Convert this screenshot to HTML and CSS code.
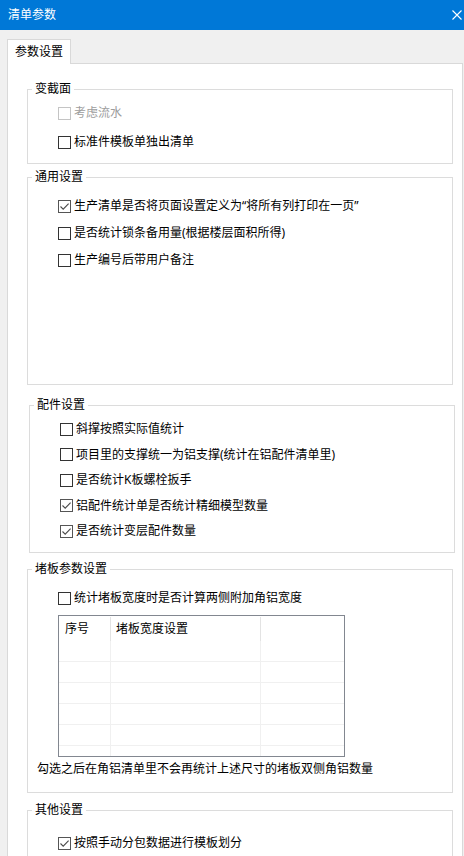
FILE: index.html
```html
<!DOCTYPE html>
<html lang="zh-CN">
<head>
<meta charset="utf-8">
<title>清单参数</title>
<link rel="stylesheet" href="styles.css">
</head>
<body>
<div class="window">
  <div class="titlebar">
    <span class="title">清单参数</span>
    <svg class="close" width="10" height="10" viewBox="0 0 10 10"><path d="M0.5 0.5 L9.5 9.5 M9.5 0.5 L0.5 9.5" stroke="#fff" stroke-width="1.1" fill="none"/></svg>
  </div>
  <div class="client">
    <div class="tabs"><div class="tab">参数设置</div></div>
    <div class="panel">
      <fieldset class="group g1">
        <legend>变截面</legend>
        <div class="rows">
          <div class="cb disabled"><span class="box"></span><span class="lbl">考虑流水</span></div>
          <div class="cb"><span class="box"></span><span class="lbl">标准件模板单独出清单</span></div>
        </div>
      </fieldset>
      <fieldset class="group g2">
        <legend>通用设置</legend>
        <div class="rows">
          <div class="cb checked"><span class="box"><svg width="11" height="11" viewBox="0 0 11 11"><path d="M1.5 5.5 L4.2 8.2 L9.6 2.6" stroke="#4a4a4a" stroke-width="1.1" fill="none"/></svg></span><span class="lbl">生产清单是否将页面设置定义为“将所有列打印在一页”</span></div>
          <div class="cb"><span class="box"></span><span class="lbl">是否统计锁条备用量(根据楼层面积所得)</span></div>
          <div class="cb"><span class="box"></span><span class="lbl">生产编号后带用户备注</span></div>
        </div>
      </fieldset>
      <fieldset class="group g3">
        <legend>配件设置</legend>
        <div class="rows">
          <div class="cb"><span class="box"></span><span class="lbl">斜撑按照实际值统计</span></div>
          <div class="cb"><span class="box"></span><span class="lbl">项目里的支撑统一为铝支撑(统计在铝配件清单里)</span></div>
          <div class="cb"><span class="box"></span><span class="lbl">是否统计K板螺栓扳手</span></div>
          <div class="cb checked"><span class="box"><svg width="11" height="11" viewBox="0 0 11 11"><path d="M1.5 5.5 L4.2 8.2 L9.6 2.6" stroke="#4a4a4a" stroke-width="1.1" fill="none"/></svg></span><span class="lbl">铝配件统计单是否统计精细模型数量</span></div>
          <div class="cb checked"><span class="box"><svg width="11" height="11" viewBox="0 0 11 11"><path d="M1.5 5.5 L4.2 8.2 L9.6 2.6" stroke="#4a4a4a" stroke-width="1.1" fill="none"/></svg></span><span class="lbl">是否统计变层配件数量</span></div>
        </div>
      </fieldset>
      <fieldset class="group g4">
        <legend>堵板参数设置</legend>
        <div class="rows">
          <div class="cb"><span class="box"></span><span class="lbl">统计堵板宽度时是否计算两侧附加角铝宽度</span></div>
          <div class="grid">
            <div class="ghead">
              <div class="gc c1">序号</div>
              <div class="gc c2">堵板宽度设置</div>
              <div class="gc c3"></div>
            </div>
            <div class="grow"><div class="gc c1"></div><div class="gc c2"></div><div class="gc c3"></div></div>
            <div class="grow"><div class="gc c1"></div><div class="gc c2"></div><div class="gc c3"></div></div>
            <div class="grow"><div class="gc c1"></div><div class="gc c2"></div><div class="gc c3"></div></div>
            <div class="grow"><div class="gc c1"></div><div class="gc c2"></div><div class="gc c3"></div></div>
            <div class="grow"><div class="gc c1"></div><div class="gc c2"></div><div class="gc c3"></div></div>
            <div class="grow"><div class="gc c1"></div><div class="gc c2"></div><div class="gc c3"></div></div>
          </div>
          <div class="note">勾选之后在角铝清单里不会再统计上述尺寸的堵板双侧角铝数量</div>
        </div>
      </fieldset>
      <fieldset class="group g5">
        <legend>其他设置</legend>
        <div class="rows">
          <div class="cb checked"><span class="box"><svg width="11" height="11" viewBox="0 0 11 11"><path d="M1.5 5.5 L4.2 8.2 L9.6 2.6" stroke="#4a4a4a" stroke-width="1.1" fill="none"/></svg></span><span class="lbl">按照手动分包数据进行模板划分</span></div>
        </div>
      </fieldset>
    </div>
  </div>
</div>
</body>
</html>
```

FILE: styles.css
```css
html, body {
  margin: 0;
  padding: 0;
}
body {
  width: 464px;
  height: 856px;
  overflow: hidden;
  background: #f0f0f0;
  font-family: "Noto Sans", "Noto Sans CJK SC", sans-serif;
  font-size: 12px;
  line-height: 16px;
  color: #000;
}
.window {
  width: 464px;
  height: 856px;
  display: flex;
  flex-direction: column;
}
.titlebar {
  height: 30px;
  flex: none;
  background: #0078d7;
  display: flex;
  align-items: center;
  justify-content: space-between;
  padding: 0 2px 0 8px;
  box-sizing: border-box;
}
.title {
  color: #fff;
  font-size: 12px;
}
.close {
  display: block;
  margin-bottom: 1px;
}
.client {
  flex: 1;
  padding: 9px 1px 0 7px;
  display: flex;
  flex-direction: column;
}
.tabs {
  display: flex;
}
.tab {
  position: relative;
  z-index: 1;
  width: 64px;
  height: 25px;
  box-sizing: border-box;
  border: 1px solid #d9d9d9;
  border-bottom: none;
  background: #fff;
  margin-bottom: -1px;
  display: flex;
  align-items: center;
  justify-content: center;
  padding-bottom: 1px;
}
.panel {
  flex: 1;
  width: 456px;
  box-sizing: border-box;
  border: 1px solid #d9d9d9;
  background: #fff;
  padding: 17px 0 0 19px;
  display: flex;
  flex-direction: column;
  align-items: flex-start;
}
.group {
  margin: 0;
  padding: 0;
  min-width: 0;
  width: 426px;
  box-sizing: border-box;
  border: 1px solid #dcdcdc;
}
.group legend {
  margin-left: 4px;
  padding: 0 3px;
  line-height: 16px;
  height: 16px;
}
.rows {
  display: flex;
  flex-direction: column;
  align-items: flex-start;
  padding-left: 30px;
}
.g1 .rows { padding-top: 6px; padding-bottom: 11px; gap: 9px; }
.g2 { margin-top: 5px; }
.g2 .rows { padding-top: 11px; padding-bottom: 114px; gap: 7px; }
.g3 { margin-top: 12px; margin-left: 2px; }
.g3 .rows { padding-top: 6px; padding-bottom: 11px; gap: 5.5px; }
.g4 { margin-top: 8px; }
.g4 .rows { padding-top: 11px; padding-bottom: 15px; }
.g5 { margin-top: 9px; }
.g5 .rows { padding-top: 15px; padding-bottom: 20px; }

.cb {
  height: 20px;
  display: flex;
  align-items: center;
}
.box {
  width: 13px;
  height: 13px;
  box-sizing: border-box;
  border: 1px solid #333;
  background: #fff;
  margin-right: 3px;
  display: flex;
  align-items: center;
  justify-content: center;
}
.box svg { display: block; }
.checked .box { border-color: #555; }
.disabled .box { border-color: #c4c4c4; }
.disabled .lbl { color: #9d9d9d; }

.grid {
  margin-top: 7px;
  width: 287px;
  height: 142px;
  box-sizing: border-box;
  border: 1px solid #828790;
  overflow: hidden;
  background: #fff;
}
.ghead {
  display: flex;
  height: 25px;
  box-sizing: border-box;
  padding-top: 1px;
}
.ghead .gc {
  border-right: 1px solid #e3e3e3;
  line-height: 24px;
}
.ghead .c1 { padding-left: 6px; }
.ghead .c2 { padding-left: 5px; }
.ghead .c3 { border-right: none; }
.grow {
  display: flex;
  height: 21px;
  box-sizing: border-box;
  border-bottom: 1px solid #f0f0f0;
}
.grow .gc { border-right: 1px solid #f0f0f0; }
.grow .c3 { border-right: none; }
.gc {
  box-sizing: border-box;
  flex: none;
}
.c1 { width: 52px; }
.c2 { width: 150px; }
.c3 { width: 83px; }
.note {
  margin-top: 4px;
  margin-left: -21px;
  height: 16px;
}
```
